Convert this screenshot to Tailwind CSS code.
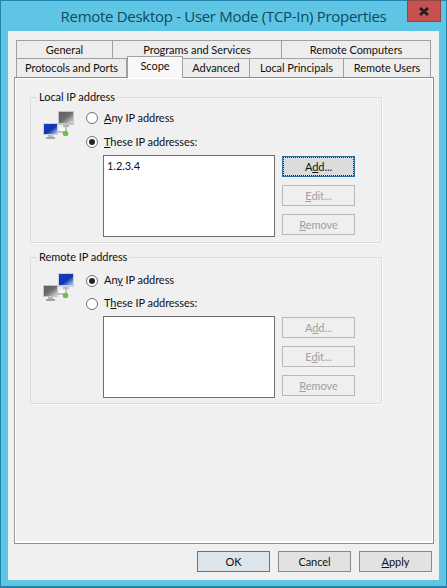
<!DOCTYPE html>
<html lang="en">
  <head>
    <meta charset="UTF-8" />
    <meta name="viewport" content="width=device-width, initial-scale=1.0" />
    <title>Remote Desktop - User Mode (TCP-In) Properties</title>
    <script src="https://cdn.jsdelivr.net/npm/@tailwindcss/browser@4"></script>
  </head>
  <body class="bg-[#5fc5e5]">
    <!-- Window frame -->
    <div class="w-[447px] h-[588px] flex flex-col border-x border-b-2 border-t border-[#1f85ad] bg-[#5fc5e5] font-['Lato','Liberation_Sans',sans-serif] text-[11px] tracking-[-0.05px] text-[#111]">
      <!-- Title bar -->
      <div class="h-[30px] shrink-0 flex relative">
        <div class="flex-1 text-center text-[#0f4a5c] text-[15px] tracking-[-0.3px] leading-[30px] font-['Open_Sans','Liberation_Sans',sans-serif]">Remote Desktop - User Mode (TCP-In) Properties</div>
        <div class="absolute top-[-1px] right-[5px] w-[34px] h-[22px] bg-[#c75050] border border-[#8e4a4a] flex items-center justify-center">
          <svg width="10" height="9" viewBox="0 0 10 9"><path d="M1 1 L9 8 M9 1 L1 8" stroke="#1c1c1c" stroke-width="2.6" /></svg>
        </div>
      </div>

      <!-- Dialog body -->
      <div class="mx-[7px] h-[549px] bg-[#f0f0f0] flex flex-col px-[6px]">
        <!-- Tabs -->
        <div class="mt-[9px] px-[2px] text-center">
          <div class="flex h-[18px] leading-[17px]">
            <div class="w-[97px] bg-[#ededed] border border-b-0 border-[#a0a0a0]">General</div>
            <div class="w-[169px] bg-[#ededed] border-t border-r border-[#a0a0a0]">Programs and Services</div>
            <div class="w-[149px] bg-[#ededed] border-t border-r border-[#a0a0a0]">Remote Computers</div>
          </div>
          <div class="flex h-[19px] leading-[18px]">
            <div class="w-[111px] bg-[#ededed] border border-b-0 border-[#a0a0a0]">Protocols and Ports</div>
            <div class="relative z-10 w-[56px] h-[22px] -mt-[2px] bg-[#f8f8f8] border border-b-0 border-[#a0a0a0]">Scope</div>
            <div class="w-[67px] bg-[#ededed] border-t border-r border-[#a0a0a0]">Advanced</div>
            <div class="w-[94px] bg-[#ededed] border-t border-r border-[#a0a0a0]">Local Principals</div>
            <div class="w-[87px] bg-[#ededed] border-t border-r border-[#a0a0a0]">Remote Users</div>
          </div>
        </div>

        <!-- Scope tab panel -->
        <div class="w-[420px] h-[467px] border border-[#8c8c8c] border-l-[#9a9a9a] bg-[#f0f0f0] shadow-[inset_1px_1px_0_#fff,inset_-1px_-2px_0_#fff] pl-[15px] pt-[11px]">
          <!-- Local IP address -->
          <fieldset class="w-[352px] h-[154px] border border-[#dcdcdc] rounded-[2px] shadow-[1px_1px_0_#fafafa] pl-[12px] pt-[1px]">
            <legend class="-ml-[6px] px-[2px] h-[16px] leading-[16px]">Local IP address</legend>
            <div class="flex">
              <svg class="mt-[5px] w-[32px] h-[29px] shrink-0 blur-[0.4px]" viewBox="0 0 32 29">
                <defs>
                  <linearGradient id="blue1" x1="0" y1="0" x2="1" y2="1"><stop offset="0" stop-color="#1b3fc0" /><stop offset="0.55" stop-color="#0f35b0" /><stop offset="1" stop-color="#a8d4f0" /></linearGradient>
                  <linearGradient id="gray1" x1="0" y1="0" x2="1" y2="1"><stop offset="0" stop-color="#5e5e5e" /><stop offset="0.5" stop-color="#6e6e6e" /><stop offset="1" stop-color="#dedede" /></linearGradient>
                </defs>
                <rect x="15" y="0" width="16" height="14" fill="#c4c4c4" />
                <rect x="16" y="1" width="14" height="11" fill="url(#gray1)" />
                <rect x="20" y="14" width="6" height="2" fill="#b5b5b5" />
                <rect x="17" y="17" width="7" height="6" fill="#fafafa" />
                <path d="M23 16 V21 H15" stroke="#8a8a8a" fill="none" />
                <circle cx="22.5" cy="22.5" r="2.8" fill="#6cc04a" />
                <rect x="0" y="12" width="15" height="12" fill="#c8d2dc" />
                <rect x="1" y="13" width="13" height="10" fill="url(#blue1)" />
                <rect x="5" y="24" width="5" height="2" fill="#b8bcc0" />
                <rect x="3" y="26" width="9" height="2" fill="#a2a6aa" />
              </svg>
              <div class="ml-[11px] w-[179px]">
                <div class="h-[24px] flex items-center">
                  <span class="w-[12px] h-[12px] rounded-full border border-[#707070] bg-white"></span>
                  <span class="ml-[6px]"><u>A</u>ny IP address</span>
                </div>
                <div class="h-[24px] flex items-center">
                  <span class="w-[12px] h-[12px] rounded-full border border-[#707070] bg-white flex items-center justify-center"><span class="w-[6px] h-[6px] rounded-full bg-[#222]"></span></span>
                  <span class="ml-[6px]"><u>T</u>hese IP addresses:</span>
                </div>
                <div class="ml-[17px] mt-[1px] w-[172px] h-[82px] border border-[#6e6e6e] bg-white pl-[3px] pt-[1px] leading-[17px]">1.2.3.4</div>
              </div>
              <div class="ml-[17px] mt-[50px] w-[73px] flex flex-col gap-[8px] text-center leading-[19px]">
                <div class="h-[21px] border border-[#2f6f9f] bg-[#dcdcdc] outline-1 outline-dotted -outline-offset-2 outline-[#222]">A<u>d</u>d...</div>
                <div class="h-[21px] border border-[#b8b8b8] bg-[#efefef] text-[#a0a0a0]"><u>E</u>dit...</div>
                <div class="h-[21px] border border-[#b8b8b8] bg-[#efefef] text-[#a0a0a0]"><u>R</u>emove</div>
              </div>
            </div>
          </fieldset>

          <!-- Remote IP address -->
          <fieldset class="mt-[6px] w-[352px] h-[155px] border border-[#dcdcdc] rounded-[2px] shadow-[1px_1px_0_#fafafa] pl-[12px] pt-[4px]">
            <legend class="-ml-[6px] px-[2px] h-[16px] leading-[16px]">Remote IP address</legend>
            <div class="flex">
              <svg class="mt-[4px] w-[32px] h-[29px] shrink-0 blur-[0.4px]" viewBox="0 0 32 29">
                <defs>
                  <linearGradient id="blue2" x1="0" y1="0" x2="1" y2="1"><stop offset="0" stop-color="#1b3fc0" /><stop offset="0.55" stop-color="#0f35b0" /><stop offset="1" stop-color="#a8d4f0" /></linearGradient>
                  <linearGradient id="gray2" x1="0" y1="0" x2="1" y2="1"><stop offset="0" stop-color="#5e5e5e" /><stop offset="0.5" stop-color="#6e6e6e" /><stop offset="1" stop-color="#dedede" /></linearGradient>
                </defs>
                <rect x="15" y="0" width="16" height="14" fill="#c8d2dc" />
                <rect x="16" y="1" width="14" height="11" fill="url(#blue2)" />
                <rect x="20" y="14" width="6" height="2" fill="#b8bcc0" />
                <rect x="17" y="17" width="7" height="6" fill="#fafafa" />
                <path d="M23 16 V21 H15" stroke="#8a8a8a" fill="none" />
                <circle cx="22.5" cy="22.5" r="2.8" fill="#6cc04a" />
                <rect x="0" y="12" width="15" height="12" fill="#c4c4c4" />
                <rect x="1" y="13" width="13" height="10" fill="url(#gray2)" />
                <rect x="5" y="24" width="5" height="2" fill="#b5b5b5" />
                <rect x="3" y="26" width="9" height="2" fill="#a2a2a2" />
              </svg>
              <div class="ml-[11px] w-[179px]">
                <div class="h-[23px] flex items-center">
                  <span class="w-[12px] h-[12px] rounded-full border border-[#707070] bg-white flex items-center justify-center"><span class="w-[6px] h-[6px] rounded-full bg-[#222]"></span></span>
                  <span class="ml-[6px]">An<u>y</u> IP address</span>
                </div>
                <div class="h-[23px] flex items-center">
                  <span class="w-[12px] h-[12px] rounded-full border border-[#707070] bg-white"></span>
                  <span class="ml-[6px]">T<u>h</u>ese IP addresses:</span>
                </div>
                <div class="ml-[17px] mt-[1px] w-[172px] h-[82px] border border-[#6e6e6e] bg-white"></div>
              </div>
              <div class="ml-[17px] mt-[48px] w-[73px] flex flex-col gap-[8px] text-center leading-[19px] text-[#a0a0a0]">
                <div class="h-[21px] border border-[#b8b8b8] bg-[#efefef]">A<u>d</u>d...</div>
                <div class="h-[21px] border border-[#b8b8b8] bg-[#efefef]">E<u>d</u>it...</div>
                <div class="h-[21px] border border-[#b8b8b8] bg-[#efefef]"><u>R</u>emove</div>
              </div>
            </div>
          </fieldset>
        </div>

        <!-- Dialog buttons -->
        <div class="mt-[7px] flex justify-end gap-[8px] pr-[1px] text-center leading-[19px]">
          <div class="w-[73px] h-[21px] border border-[#3f7fb0] bg-[#dde4ea]">OK</div>
          <div class="w-[73px] h-[21px] border border-[#8a8a8a] bg-[#e2e2e2]">Cancel</div>
          <div class="w-[73px] h-[21px] border border-[#8a8a8a] bg-[#e2e2e2]"><u>A</u>pply</div>
        </div>
      </div>
    </div>
  </body>
</html>
